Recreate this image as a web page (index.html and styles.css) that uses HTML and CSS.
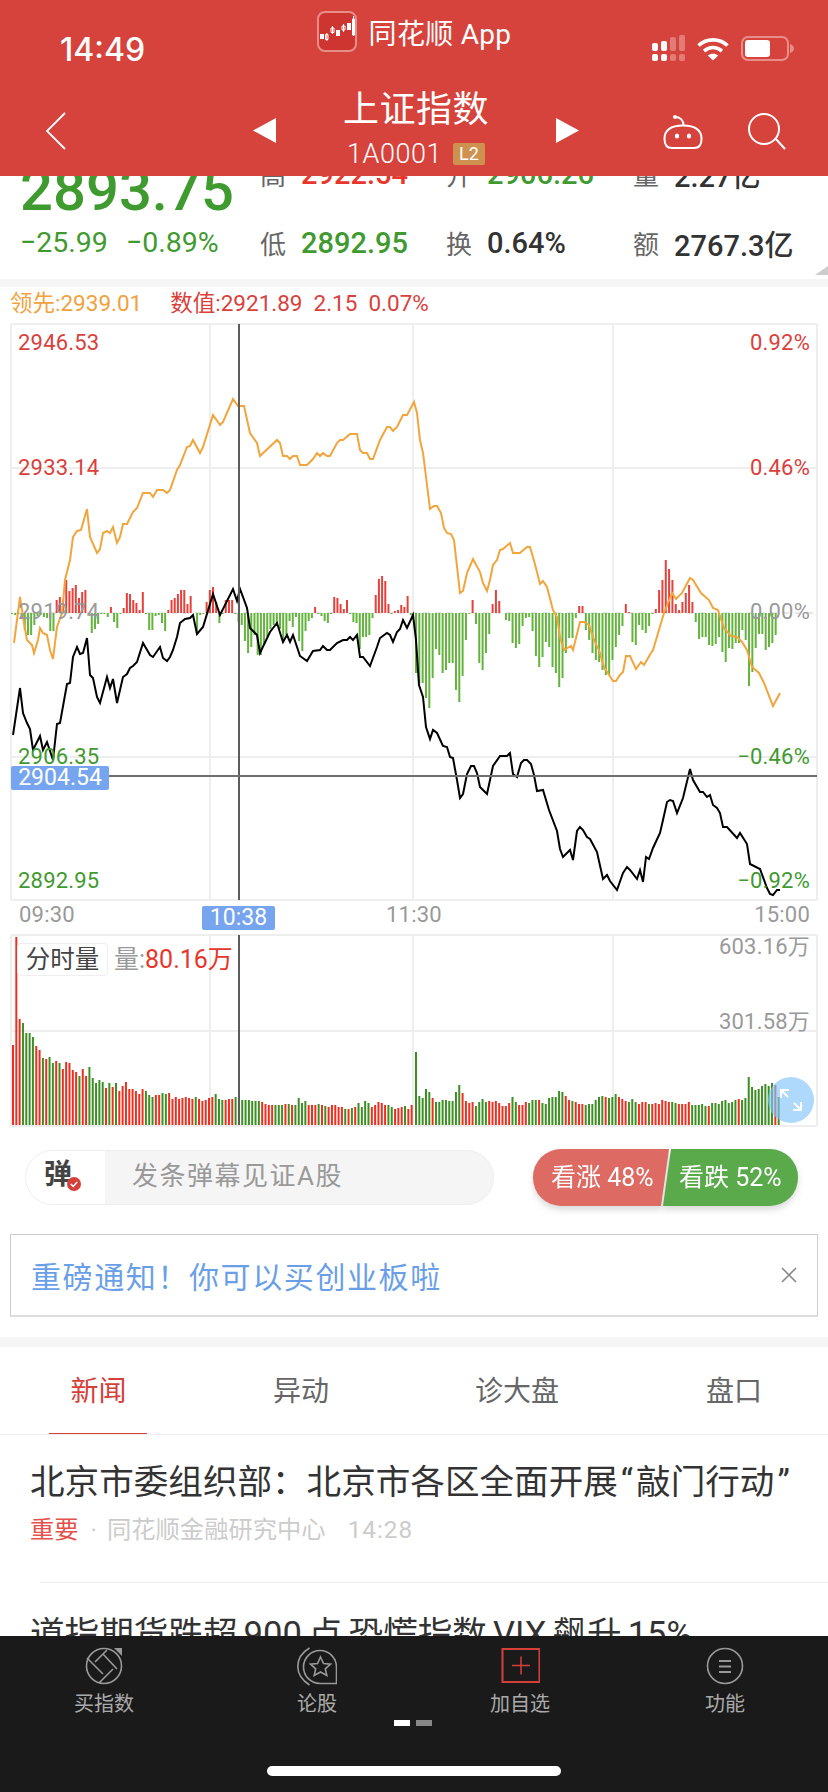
FILE: index.html
```html
<!DOCTYPE html>
<html lang="zh-CN">
<head>
<meta charset="UTF-8" />
<meta name="viewport" content="width=device-width, initial-scale=1" />
<title>上证指数</title>
<link rel="stylesheet" href="styles.css">
</head>
<body>
<div class="app">

  <div class="content">
    <div class="quote">
      <div class="quote-main">
        <div class="price">2893.75</div>
        <div class="change"><span>−25.99</span><span>−0.89%</span></div>
      </div>
      <div class="quote-grid">
        <div class="cell"><span class="key">高</span><span class="val up">2922.54</span></div>
        <div class="cell"><span class="key">开</span><span class="val down">2906.26</span></div>
        <div class="cell"><span class="key">量</span><span class="val">2.27亿</span></div>
        <div class="cell"><span class="key">低</span><span class="val down">2892.95</span></div>
        <div class="cell"><span class="key">换</span><span class="val">0.64%</span></div>
        <div class="cell"><span class="key">额</span><span class="val">2767.3亿</span></div>
      </div>
      <div class="corner"></div>
    </div>

    <div class="gap-bar"></div>

    <div class="legend">
      <span class="lead">领先:2939.01</span>
      <span class="figures"><span>数值:2921.89</span><span>2.15</span><span>0.07%</span></span>
    </div>

    <div class="chart">
      <svg id="chartSvg" class="chart-svg" viewBox="0 320 828 815" width="828" height="815"></svg>

      <span class="axis up row-1 left">2946.53</span>
      <span class="axis up row-2 left">2933.14</span>
      <span class="axis flat row-3 left">2919.74</span>
      <span class="axis down row-4 left">2906.35</span>
      <span class="axis down row-5 left">2892.95</span>
      <span class="axis up row-1 right">0.92%</span>
      <span class="axis up row-2 right">0.46%</span>
      <span class="axis flat row-3 right">0.00%</span>
      <span class="axis down row-4 right">−0.46%</span>
      <span class="axis down row-5 right">−0.92%</span>

      <span class="axis flat t-open">09:30</span>
      <span class="axis flat t-noon">11:30</span>
      <span class="axis flat t-close">15:00</span>
      <span class="tag price-tag">2904.54</span>
      <span class="tag time-tag">10:38</span>

      <span class="vol-tool">分时量</span>
      <span class="vol-now"><span class="vol-key">量:</span>80.16万</span>
      <span class="axis flat vol-max">603.16万</span>
      <span class="axis flat vol-mid">301.58万</span>

      <div class="expand">
        <svg width="46" height="46" viewBox="0 0 46 46" fill="none" stroke="#fff" stroke-width="2">
          <path d="M13 21V13H21M13 13L20 20M33 25V33H25M33 33L26 26"/>
        </svg>
      </div>
    </div>

    <div class="actions">
      <div class="danmu">
        <div class="danmu-icon">弹
          <svg class="danmu-badge" width="14" height="14" viewBox="0 0 14 14">
            <circle cx="7" cy="7" r="7" fill="#d6403a"/>
            <path d="M3.8 7L6.2 9.4L10.2 5" fill="none" stroke="#fff" stroke-width="1.5"/>
          </svg>
        </div>
        <div class="danmu-hint">发条弹幕见证A股</div>
      </div>
      <div class="vote">
        <div class="vote-up">看涨 48%</div>
        <div class="vote-down">看跌 52%</div>
      </div>
    </div>

    <div class="notice">
      <span class="notice-text">重磅通知！你可以买创业板啦</span>
      <svg width="16" height="16" viewBox="0 0 16 16" stroke="#888" stroke-width="1.6"><path d="M1 1L15 15M15 1L1 15"/></svg>
    </div>

    <div class="gap-bar thick"></div>

    <div class="tabs">
      <div class="tab active">新闻</div>
      <div class="tab">异动</div>
      <div class="tab">诊大盘</div>
      <div class="tab">盘口</div>
    </div>

    <div class="news-item">
      <div class="news-title">北京市委组织部：北京市各区全面开展<span class="mark">“</span>敲门行动<span class="mark">”</span></div>
      <div class="news-meta"><span class="hot">重要</span><span class="dot">·</span><span>同花顺金融研究中心</span><span class="news-time">14:28</span></div>
    </div>
    <div class="news-sep"></div>
    <div class="news-item second">
      <div class="news-title">道指期货跌超 900 点 恐慌指数 VIX 飙升 15%</div>
    </div>
  </div>

  <div class="header">
    <div class="status">
      <div class="clock">14:49</div>
      <div class="brand">
        <svg width="40" height="41" viewBox="0 0 40 41">
          <rect x="1" y="1" width="38" height="39" rx="7" fill="#cf3530" stroke="#e88e88" stroke-width="2"/>
          <g fill="#fff">
            <rect x="3" y="23" width="4" height="5"/>
            <rect x="19" y="19" width="4" height="6"/>
            <rect x="30" y="12" width="4" height="7"/>
          </g>
          <g fill="none" stroke="#fff" stroke-width="1">
            <path d="M8.5 23.5h2.5v5h-2.500zM9.800 22v8"/>
            <path d="M14 17h3v4.500h-3zM15.500 15v8"/>
            <path d="M25 15h3v4h-3zM26.500 13v8"/>
            <path d="M35.500 8h2v16h-2zM36.500 5v20"/>
          </g>
        </svg>
        <span>同花顺 App</span>
      </div>
      <div class="sys">
        <svg width="33" height="27" viewBox="0 0 33 27" fill="#fff">
          <rect x="0" y="8" width="6" height="8" rx="2"/>
          <rect x="9" y="6" width="6" height="10" rx="2"/>
          <rect x="0" y="19" width="6" height="7" rx="2"/>
          <rect x="9" y="19" width="6" height="7" rx="2"/>
          <g opacity=".3">
            <rect x="18" y="2" width="6" height="14" rx="2"/>
            <rect x="27" y="0" width="6" height="16" rx="2"/>
            <rect x="18" y="19" width="6" height="7" rx="2"/>
            <rect x="27" y="19" width="6" height="7" rx="2"/>
          </g>
        </svg>
        <svg width="32" height="24" viewBox="0 0 32 24" fill="none" stroke="#fff" stroke-width="3.600">
          <path d="M1.500 8.500C9.500 1 22.500 1 30.500 8.500"/>
          <path d="M7 14C12.500 9.500 19.500 9.500 25 14"/>
          <path d="M16 23.500L10.800 18.500C14 16 18 16 21.200 18.500Z" fill="#fff" stroke="none"/>
        </svg>
        <svg width="53" height="25" viewBox="0 0 53 25">
          <rect x="1" y="1" width="46" height="23" rx="6" fill="none" stroke="#fff" stroke-opacity=".4" stroke-width="2"/>
          <rect x="4" y="4" width="25" height="17" rx="3" fill="#fff"/>
          <path d="M49 8C51.500 9 53 10.500 53 12.500C53 14.500 51.500 16 49 17Z" fill="#fff" fill-opacity=".4"/>
        </svg>
      </div>
    </div>
    <div class="nav">
      <svg class="back" width="21" height="38" viewBox="0 0 21 38" fill="none" stroke="#fff" stroke-width="1.800"><path d="M20 1L2 19L20 37"/></svg>
      <div class="pager">
        <svg class="arrow" width="23" height="25" viewBox="0 0 23 25" fill="#fff"><path d="M23 0V25L0 12.500Z"/></svg>
        <div class="title-wrap">
          <div class="title">上证指数</div>
          <div class="code">1A0001<span class="level">L2</span></div>
        </div>
        <svg class="arrow" width="23" height="25" viewBox="0 0 23 25" fill="#fff"><path d="M0 0V25L23 12.500Z"/></svg>
      </div>
      <div class="nav-tools">
        <svg class="robot" width="40" height="36" viewBox="0 0 40 36" fill="none" stroke="#fff" stroke-width="2">
          <circle cx="12" cy="3" r="2" fill="#fff" stroke="none"/>
          <path d="M12 3C17 3 20.500 6 20.500 11.500"/>
          <path d="M1.500 25C1.500 15 9 11.500 20 11.500C31 11.500 38.500 15 38.500 25C38.500 31 36 34 31 34H9C4 34 1.500 31 1.500 25Z"/>
          <ellipse cx="14" cy="22" rx="2.200" ry="2.600" fill="#fff" stroke="none"/>
          <ellipse cx="26" cy="22" rx="2.200" ry="2.600" fill="#fff" stroke="none"/>
        </svg>
        <svg class="search" width="38" height="37" viewBox="0 0 38 37" fill="none" stroke="#fff" stroke-width="2">
          <circle cx="16" cy="16" r="15"/>
          <path d="M27 25L37 36"/>
        </svg>
      </div>
    </div>
  </div>

  <div class="dock">
    <div class="dock-items">
      <div class="dock-item">
        <svg width="40" height="40" viewBox="0 0 40 40" fill="none" stroke="#999" stroke-width="1.600">
          <circle cx="20" cy="20" r="17.500"/>
          <path d="M23 4L11 16M3 12L19 28M15 37L29 23M19 8L33 23"/>
          <path d="M30 2H38V10Z" fill="#999" stroke="none"/>
        </svg>
        <span>买指数</span>
      </div>
      <div class="dock-item">
        <svg width="40" height="40" viewBox="0 0 40 40" fill="none" stroke="#999" stroke-width="1.600">
          <path d="M12.500 2C4 7 .8 14 .8 20.500S4 33.500 12.500 39"/>
          <path d="M39.500 21A16.500 16.500 0 1 0 23 37.500H39.500Z"/>
          <path d="M23.500 11L26.500 17.500L33.500 18.200L28.300 22.800L29.800 29.500L23.500 26L17.200 29.500L18.700 22.800L13.500 18.200L20.500 17.500Z"/>
        </svg>
        <span>论股</span>
      </div>
      <div class="dock-item">
        <svg width="40" height="40" viewBox="0 0 40 40" fill="none" stroke="#d6403a" stroke-width="2">
          <rect x="2.500" y="3" width="37" height="33"/>
          <path d="M21 10.500V28.500M12 19.500H30" stroke-width="1.500"/>
        </svg>
        <span>加自选</span>
      </div>
      <div class="dock-item">
        <svg width="40" height="40" viewBox="0 0 40 40" fill="none" stroke="#999" stroke-width="1.600">
          <circle cx="20" cy="20" r="17.500"/>
          <path d="M14 15H26M14 20.500H26M14 26H26" stroke-width="2"/>
        </svg>
        <span>功能</span>
      </div>
    </div>
    <div class="pages"><span class="page on"></span><span class="page"></span></div>
    <div class="home-bar"></div>
  </div>

</div>
<script src="chart.js"></script>
</body>
</html>
```

FILE: styles.css
```css
* { box-sizing: border-box; }
body { margin: 0; background: #fff; font-family: Roboto, "Noto Sans CJK SC", sans-serif; color: #333; }
.app { position: relative; width: 828px; height: 1792px; overflow: hidden; background: #fff; }

/* top red bar, sits over the scrolled content */
.header { position: absolute; top: 0; left: 0; width: 828px; height: 176px; background: #d6433c; color: #fff; }
.status { display: grid; grid-template-columns: 1fr auto 1fr; height: 72px; padding: 0 34px; }
.clock { margin: 35px 0 0 26px; font-family: Inter, sans-serif; font-size: 32px; font-weight: 500; line-height: 30px; }
.brand { display: flex; align-items: center; gap: 12px; height: 41px; margin-top: 11px; font-size: 28px; letter-spacing: .3px; color: #fff; }
.sys { display: flex; justify-content: flex-end; align-items: center; gap: 12px; height: 27px; margin-top: 35px; }

.nav { display: grid; grid-template-columns: 253px 326px 1fr; height: 104px; }
.back { margin: 40px 0 0 45px; }
.pager { display: flex; justify-content: space-between; align-items: flex-start; }
.arrow { margin-top: 46px; }
.title-wrap { padding-top: 16px; text-align: center; }
.title { font-size: 36px; line-height: 44px; letter-spacing: .5px; }
.code { display: flex; align-items: center; justify-content: center; gap: 11px; height: 30px; margin-top: 7px; font-size: 27px; font-weight: 300; letter-spacing: .5px; }
.level { width: 32px; height: 22px; border-radius: 2px; background: #cf914f; font-size: 18px; font-weight: 400; letter-spacing: 0; line-height: 22px; text-align: center; }
.nav-tools { display: flex; align-items: flex-start; gap: 45px; padding-left: 84px; }
.robot { margin-top: 42px; }
.search { margin-top: 41px; }

/* quote block */
.quote { position: relative; display: flex; height: 279px; padding: 139px 0 2px 20px; }
.quote-main { width: 240px; }
.price { margin-top: 16px; font-size: 58px; font-weight: 500; line-height: 70px; color: #3f9a2f; }
.change { display: flex; gap: 18px; font-size: 28.500px; line-height: 35px; color: #3f9a2f; }
.quote-grid { display: grid; grid-template-columns: 186px 187px 1fr; grid-auto-rows: 69px; flex: 1; }
.cell { display: flex; align-items: center; gap: 15px; }
.key { font-size: 26px; color: #666; }
.val { font-size: 29px; font-weight: 500; color: #333; }
.val.up { color: #e8362c; }
.val.down { color: #3f9a2f; }
.corner { position: absolute; right: 0; bottom: 4px; width: 13px; height: 9px; background: #ccc; clip-path: polygon(100% 0, 100% 100%, 0 100%); }

.gap-bar { height: 8px; background: #f5f5f5; }
.gap-bar.thick { height: 10px; }

.legend { display: flex; align-items: baseline; gap: 28px; height: 33px; padding-left: 10px; font-size: 22.500px; line-height: 33px; }
.lead { color: #f0a23c; }
.figures { display: flex; align-items: baseline; gap: 11px; color: #d9413d; }

/* charts */
.chart { position: relative; width: 828px; height: 815px; }
.chart-svg { display: block; }
.axis { position: absolute; font-size: 22px; line-height: 24px; letter-spacing: .2px; }
.axis.left { left: 18px; }
.axis.right { right: 18px; }
.axis.up { color: #d9413d; }
.axis.down { color: #3f9a2f; }
.axis.flat { color: #999; }
.row-1 { top: 11px; }
.row-2 { top: 136px; }
.row-3 { top: 280px; }
.row-4 { top: 425px; }
.row-5 { top: 549px; }
.t-open { top: 583px; left: 19px; }
.t-noon { top: 583px; left: 386px; }
.t-close { top: 583px; right: 18px; }
.tag { position: absolute; height: 24px; border-radius: 2px; background: #77a4ee; color: #fff; font-size: 23px; line-height: 24px; text-align: center; }
.price-tag { top: 446px; left: 11px; width: 98px; }
.time-tag { top: 586px; left: 202px; width: 73px; }
.vol-tool { position: absolute; top: 623px; left: 17px; width: 91px; height: 33px; border: 1px solid #eee; border-radius: 4px; background: #fff; font-size: 24.500px; line-height: 31px; text-align: center; color: #444; }
.vol-now { position: absolute; top: 628px; left: 114px; font-size: 25px; line-height: 24px; color: #e8362c; }
.vol-key { color: #999; }
.vol-max { top: 615px; right: 18px; }
.vol-mid { top: 690px; right: 18px; }
.expand { position: absolute; top: 757px; left: 768px; width: 46px; height: 46px; border-radius: 50%; background: rgba(130, 195, 250, .65); }

/* danmu + vote row */
.actions { display: flex; align-items: center; gap: 39px; height: 57px; margin-top: 14px; padding-left: 25px; }
.danmu { display: flex; width: 469px; height: 55px; border: 1px solid #eee; border-radius: 28px; background: #f5f5f5; overflow: hidden; }
.danmu-icon { position: relative; width: 79px; padding-left: 18px; background: #fff; font-size: 28px; font-weight: 700; line-height: 48px; color: #444; }
.danmu-badge { position: absolute; top: 26px; left: 41px; }
.danmu-hint { padding-left: 27px; font-size: 26px; letter-spacing: 1.500px; line-height: 50px; color: #999; }
.vote { display: flex; width: 265px; height: 57px; filter: drop-shadow(0 4px 3px rgba(0, 0, 0, .14)); color: #fff; font-size: 25px; line-height: 57px; }
.vote-up { width: 136px; padding-left: 18px; border-radius: 28px 0 0 28px; background: #dd6a63; clip-path: polygon(0 0, 100% 0, calc(100% - 8px) 100%, 0 100%); }
.vote-down { width: 135px; margin-left: -6px; padding-left: 16px; border-radius: 0 28px 28px 0; background: #5aa94a; clip-path: polygon(8px 0, 100% 0, 100% 100%, 0 100%); }

.notice { display: flex; align-items: center; justify-content: space-between; width: 808px; height: 83px; margin: 28px 0 20px 10px; padding: 0 20px 0 20px; border: 1px solid #ccc; border-bottom: 2px solid #ddd; }
.notice-text { font-size: 30px; letter-spacing: 1.600px; color: #6a9fe8; }

/* tabs */
.tabs { display: grid; grid-template-columns: 197px 208px 224px 210px; width: 828px; height: 88px; border-bottom: 1px solid #eee; overflow: hidden; }
.tab { position: relative; font-size: 28px; line-height: 90px; text-align: center; color: #666; }
.tab.active { color: #d6403a; }
.tab.active::after { content: ""; position: absolute; left: 49px; bottom: 0; width: 98px; height: 4px; background: #d6403a; }

/* news */
.news-item { height: 147px; margin-left: 30px; padding-top: 23px; }
.news-item.second { height: auto; padding-top: 27px; }
.news-item.second .news-title { word-spacing: -2.500px; }
.news-sep { height: 1px; margin-left: 40px; background: #eee; }
.news-title { font-size: 34.600px; line-height: 48px; white-space: nowrap; color: #333; }
.mark { padding: 0 3px; }
.news-meta { display: flex; height: 34px; margin-top: 7px; font-size: 24.300px; line-height: 34px; color: #ccc; }
.hot { color: #e5524c; }
.dot { margin: 0 10px 0 12px; }
.news-time { margin-left: 22px; letter-spacing: 1px; }

/* bottom dock */
.dock { position: absolute; top: 1636px; left: 0; width: 828px; height: 156px; background: #1a1a1a; }
.dock-items { display: grid; grid-template-columns: 208px 218px 188px 222px; padding-top: 10px; }
.dock-item { display: flex; flex-direction: column; align-items: center; gap: 6px; font-size: 20px; line-height: 24px; color: #aaa; }
.pages { display: flex; justify-content: center; gap: 6px; margin: 4px 0 0 -2px; }
.page { width: 16px; height: 6px; background: #888; }
.page.on { background: #fff; }
.home-bar { width: 294px; height: 10px; margin: 40px 0 0 267px; border-radius: 5px; background: #fff; }
```

FILE: chart.js
```js
const svg = document.getElementById('chartSvg');
const NS = 'http://www.w3.org/2000/svg';

const RED_DELTA = '#e8413c', GREEN_DELTA = '#63b33d';
const RED_VOL = '#ee2f1f', GREEN_VOL = '#3c8f22';

// orange line: leading index
const leadLine = '14,643 20,597 24,623 27,640 32,645 34,653 38,640 40,628 43,633 47,635 50,650 53,659 57,627 62,613 65,580 70,560 73,537 77,531 81,530 87,509 90,537 97,553 100,549 103,533 107,531 110,533 113,527 117,543 120,537 123,524 127,524 133,512 137,508 143,493 150,493 153,497 157,490 163,490 167,493 170,490 177,470 180,465 187,447 190,446 193,440 200,453 203,447 213,415 220,425 223,422 233,399 238,406 244,406 250,433 257,443 260,456 277,440 280,443 283,456 287,456 290,459 293,456 297,456 300,465 307,465 313,459 317,453 320,456 323,453 327,456 330,456 337,443 340,440 343,440 350,434 357,434 360,450 363,453 367,453 370,459 373,459 380,440 387,427 390,427 393,431 397,427 403,415 407,415 414,402 417,413 420,440 423,453 430,509 434,506 437,506 441,513 444,528 447,533 451,534 454,540 460,593 463,591 467,573 473,559 480,572 483,583 487,591 490,580 493,565 497,560 500,550 503,549 510,543 513,553 520,553 527,547 530,547 533,557 537,572 540,584 543,581 547,587 553,610 557,617 560,637 564,650 571,646 573,650 580,622 584,622 589,625 594,640 599,650 604,667 613,681 616,681 620,675 623,672 626,656 630,656 636,669 641,662 644,665 651,653 653,650 664,613 672,593 676,599 682,593 690,578 693,580 701,593 709,600 713,608 718,610 724,628 731,636 737,637 742,642 747,650 752,667 759,673 764,683 773,706 780,693';

// black line: index price
const priceLine = '13,735 20,688 23,713 27,723 30,729 33,750 40,736 43,750 47,742 53,760 57,724 60,723 67,684 70,683 73,657 77,647 80,654 83,653 87,638 90,675 93,678 97,697 100,703 107,677 110,688 113,679 117,703 123,677 127,674 130,668 133,666 137,662 143,643 150,655 153,657 160,647 163,658 167,661 170,657 173,650 177,637 180,623 185,619 190,618 193,615 197,634 203,627 213,594 220,615 233,589 237,601 240,589 247,608 250,628 257,635 260,653 270,632 277,623 283,642 287,635 290,642 293,635 300,656 307,661 313,651 320,650 323,646 327,650 330,650 337,643 343,640 347,640 350,637 353,640 357,635 360,657 363,657 370,666 377,647 380,638 387,633 390,635 393,642 397,632 400,629 403,620 407,628 413,615 416,640 419,685 423,697 426,727 430,739 433,730 437,733 443,746 447,747 450,757 453,758 457,780 460,798 463,794 467,774 471,766 474,766 477,773 480,787 487,794 493,766 500,756 507,756 510,753 513,774 517,777 521,763 524,760 527,760 531,764 534,775 537,791 543,790 549,810 557,831 560,849 563,857 570,850 573,860 577,831 580,827 583,830 587,837 590,839 597,852 603,879 607,875 610,881 617,890 623,873 627,867 630,870 637,879 640,870 643,882 646,857 649,859 653,848 660,833 663,820 667,802 670,800 673,801 677,813 683,798 690,769 693,780 700,792 703,792 707,797 710,795 713,805 717,808 720,813 723,827 727,827 737,838 740,833 747,844 750,864 760,869 767,888 770,894 773,895 777,890 780,890';

// red above the zero line, green below
const deltaAm = [-1,-2,-1,-4,-17,-22,-22,-12,-3,-2,-4,-5,-18,-18,13,16,13,33,22,25,28,15,21,23,0,-20,-16,-11,-1,-1,-4,6,-9,-15,-1,5,20,19,13,10,3,21,-1,-17,-17,-3,-2,-10,-18,3,13,15,19,23,23,9,17,0,-18,-2,-1,11,23,26,11,-10,-1,13,13,13,-1,-9,-12,-28,-40,-34,-22,-42,-42,-32,-24,-16,-12,-10,-16,-30,-22,-8,-14,-4,-28,-38,-18,-8,-5,6,-1,-3,-8,-10,-1,16,15,9,4,13,-1,-9,-10,-36,-24,-24,-22,-5,18,34,37,32,9,-1,2,3,8,6,17,-2];
const deltaPm = [-60,-70,-70,-85,-95,-65,-36,-42,-60,-57,-50,-50,-77,-89,-63,-27,-1,13,-11,-50,-57,-40,-21,9,23,12,0,-7,-8,-30,-35,-31,-13,-5,-4,-18,-43,-54,-44,-29,-34,-54,-60,-74,-65,-40,-25,-25,-5,7,7,-17,-27,-40,-47,-49,-57,-62,-62,-47,-34,-22,-13,9,1,-29,-32,-12,-17,-20,-13,-1,4,23,33,53,44,33,9,3,11,20,28,11,-9,-26,-24,-24,-32,-33,-31,-24,-39,-49,-35,-36,-30,-30,-17,-27,-73,-59,-35,-21,-21,-37,-34,-30,-22];

// volume: positive is a red bar, negative a green one
const volAm = [80,188,106,-102,-92,-92,-88,79,75,-67,66,-68,-62,64,-62,56,63,62,55,53,-49,56,49,-58,-47,-42,-45,-43,37,-42,38,-42,34,39,43,36,36,34,31,36,-34,-30,-28,30,30,-32,-31,32,26,28,26,27,28,27,26,-28,26,24,25,27,28,-31,-26,-25,25,26,26,-28,-26,-25,-25,-25,-24,-24,-24,23,21,20,20,-20,-20,-20,21,-21,20,-20,-27,-22,-24,20,20,20,-21,20,-19,18,20,20,18,18,-16,16,-17,18,-22,-18,-24,-22,18,20,23,22,20,-20,-18,16,17,18,-19,16,20];
const volPm = [-73,-29,-27,-36,-33,27,-23,-23,-25,-25,-24,-24,-33,-40,32,24,22,23,-19,-23,-26,-23,24,23,24,22,19,19,22,-28,-23,20,20,23,-22,-25,-25,25,-22,-21,-27,-28,-28,-34,-33,29,25,-24,23,21,21,-20,-21,-21,-25,-28,-29,28,-27,-28,-31,28,26,24,-23,-26,-23,21,23,23,-21,21,22,21,25,24,23,-23,-22,21,21,21,23,-20,-20,-20,-21,-19,19,-22,-22,-21,-24,-25,-22,-23,-25,26,-25,-27,-48,-38,-35,-36,-39,-41,-39,-42,40,-28];

function add(tag, attrs) {
  const el = document.createElementNS(NS, tag);
  for (const k in attrs) el.setAttribute(k, attrs[k]);
  svg.appendChild(el);
  return el;
}

function line(x1, y1, x2, y2, color, width) {
  add('line', { x1, y1, x2, y2, stroke: color, 'stroke-width': width });
}

function frame(top, bottom, rows) {
  const grey = '#eeeeee';
  [11, 210, 413, 613, 817].forEach(x => line(x, top, x, bottom, grey, 2));
  rows.forEach(y => line(11, y, 817, y, grey, 2));
}

function deltaBars(values, start, end) {
  const step = (end - start) / values.length;
  values.forEach((v, i) => {
    if (v === 0) return;
    add('rect', {
      x: start + i * step, y: v > 0 ? 613 - v : 613,
      width: 2, height: Math.abs(v),
      fill: v > 0 ? RED_DELTA : GREEN_DELTA
    });
  });
}

function volumeBars(values, start, end) {
  const step = (end - start) / values.length;
  values.forEach((v, i) => {
    const h = Math.abs(v);
    add('rect', {
      x: start + i * step, y: 1125 - h,
      width: 2, height: h,
      fill: v > 0 ? RED_VOL : GREEN_VOL
    });
  });
}

// price panel
frame(324, 900, [324, 468, 757, 900]);
for (let x = 15; x < 817; x += 12) line(x, 613, x + 6, 613, '#dddddd', 1.4);
deltaBars(deltaAm, 11, 413);
deltaBars(deltaPm, 415, 778);
add('polyline', { points: leadLine, fill: 'none', stroke: '#f2a53c', 'stroke-width': 2 });
add('polyline', { points: priceLine, fill: 'none', stroke: '#000', 'stroke-width': 2 });
line(239, 324, 239, 900, '#5c5c5c', 2);
line(108, 776, 817, 776, '#6e6e6e', 2);

// volume panel
frame(935, 1126, [935, 1031, 1126]);
volumeBars(volAm, 12, 414);
volumeBars(volPm, 415, 781);
line(239, 935, 239, 1125, '#5c5c5c', 2);
```
